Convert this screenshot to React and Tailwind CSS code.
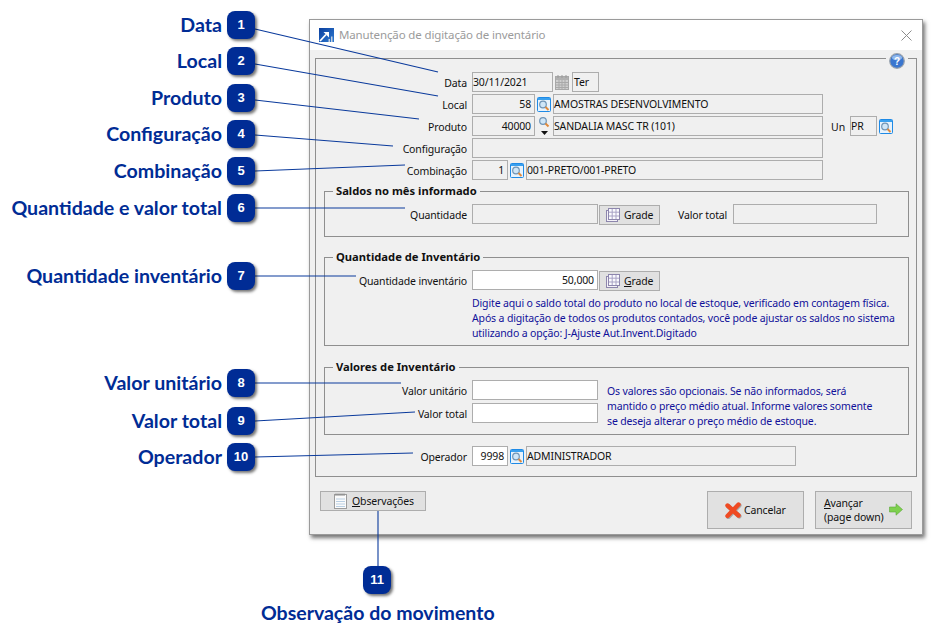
import React from "react";

const tahoma = { fontFamily: '"Noto Sans", sans-serif' };

// Callouts around the window
const callouts = [
  { n: 1, label: "Data", top: 11 },
  { n: 2, label: "Local", top: 47 },
  { n: 3, label: "Produto", top: 84 },
  { n: 4, label: "Configuração", top: 120 },
  { n: 5, label: "Combinação", top: 157 },
  { n: 6, label: "Quantidade e valor total", top: 194 },
  { n: 7, label: "Quantidade inventário", top: 262 },
  { n: 8, label: "Valor unitário", top: 369 },
  { n: 9, label: "Valor total", top: 407 },
  { n: 10, label: "Operador", top: 443 },
];

const lines = [
  [255, 29, 438, 72],
  [255, 64, 438, 96],
  [255, 100, 419, 119],
  [255, 135, 393, 146],
  [255, 171, 405, 165],
  [255, 208, 405, 208],
  [255, 276, 356, 276],
  [255, 383, 401, 383],
  [255, 421, 415, 412],
  [255, 457, 413, 453],
  [378, 511, 378, 566],
];

const Badge = ({ n, left, top }) => (
  <div
    className="absolute w-7 h-7 rounded-lg bg-[#002c95] text-white flex items-center justify-center text-[13px] font-bold shadow-[2px_2px_3px_rgba(0,0,0,0.55)]"
    style={{ left, top, fontFamily: '"Liberation Sans", sans-serif' }}
  >
    {n}
  </div>
);

// Search button with blue frame
const SearchIcon = () => (
  <svg width="14" height="15" viewBox="0 0 14 15" className="shrink-0">
    <rect x="0.5" y="0.5" width="13" height="14" rx="1" fill="#e8f3fc" stroke="#1e8ae6" />
    <rect x="1" y="1" width="12" height="2" fill="#3aa0ee" />
    <circle cx="6" cy="7.5" r="3.3" fill="#cfe6f7" stroke="#6f94b5" strokeWidth="1.2" />
    <path d="M8.5 10 L11.5 13" stroke="#e08a3c" strokeWidth="2" />
  </svg>
);

const Field = ({ w, children, right, white, ml }) => (
  <div
    className={`h-5 shrink-0 border border-[#adadad] flex items-center text-[10.5px] tracking-[-0.14px] leading-none text-[#111] whitespace-nowrap ${
      right ? "justify-end pr-[3px]" : ""
    } ${white ? "bg-white" : "bg-[#f0f0f0]"}`}
    style={{ width: w, marginLeft: ml || 0 }}
  >
    {children}
  </div>
);

const Row = ({ label, labelW, children }) => (
  <div className="flex items-center h-5">
    <div
      className="text-right text-[10.5px] tracking-[-0.14px] text-[#111] whitespace-nowrap pt-[3px] shrink-0"
      style={{ width: labelW }}
    >
      {label}
    </div>
    <div className="flex items-center ml-[5px]">{children}</div>
  </div>
);

const GridIcon = () => (
  <svg width="14" height="14" viewBox="0 0 14 14" className="shrink-0">
    <rect x="0.5" y="2.5" width="11" height="11" fill="#f4f2f8" stroke="#8d86ad" />
    <rect x="2.5" y="0.5" width="11" height="11" fill="#fafafe" stroke="#8d86ad" />
    <path d="M6.2 1V11M10 1V11M3 4.2H13M3 8H13" stroke="#a9a3c5" />
  </svg>
);

const GradeBtn = ({ underline }) => (
  <div className="w-[61px] h-5 mt-px ml-px border border-[#adadad] bg-[#e1e1e1] flex items-center pl-[6px] gap-[4px] text-[10.5px] tracking-[-0.14px] text-[#111] shrink-0">
    <GridIcon />
    <span className="pt-[2px]">
      <span className={underline ? "underline" : ""}>G</span>rade
    </span>
  </div>
);

const Group = ({ title, h, mt, children }) => (
  <div
    className="relative ml-2 w-[585px] border border-[#8f8f8f] pt-3"
    style={{ height: h, marginTop: mt }}
  >
    <div className="absolute -top-[9px] left-[8px] bg-[#f0f0f0] px-[3px] text-[11.2px] leading-4 font-bold text-[#111] whitespace-nowrap">
      {title}
    </div>
    {children}
  </div>
);

export default function App() {
  return (
    <div className="relative w-[946px] h-[641px] bg-white overflow-hidden" style={tahoma}>
      {/* Dialog */}
      <div className="pt-[19px] pl-[309px]">
        <div className="w-[614px] h-[516px] border border-[#9a9a9a] bg-[#f0f0f0] shadow-[2px_3px_4px_rgba(0,0,0,0.55)] flex flex-col">
          {/* Title bar */}
          <div className="h-[30px] bg-white flex items-center pl-[9px] pr-[10px] shrink-0">
            <svg width="15" height="14" viewBox="0 0 15 14" className="shrink-0">
              <defs>
                <linearGradient id="logoBg" x1="0" y1="0" x2="1" y2="1">
                  <stop offset="0" stopColor="#0b3f9e" />
                  <stop offset="1" stopColor="#2f7ad0" />
                </linearGradient>
              </defs>
              <rect width="15" height="14" fill="url(#logoBg)" />
              <path d="M1 13 L7 6.5" stroke="#fff" strokeWidth="1.8" />
              <path d="M4.5 4 H10 V9.5 Z" fill="#fff" />
              <path d="M9.5 14 V11 H11 V14 Z M12 14 V8.5 H13.5 V14 Z" fill="#c4cfdf" />
            </svg>
            <span className="ml-[5px] text-[11.5px] tracking-[-0.13px] text-[#9b9b9b] whitespace-nowrap">
              Manutenção de digitação de inventário
            </span>
            <svg width="11" height="11" viewBox="0 0 11 11" className="ml-auto">
              <path d="M0.5 0.5 L10.5 10.5 M10.5 0.5 L0.5 10.5" stroke="#8c8c8c" />
            </svg>
          </div>

          <div className="flex-1 px-[5px] pt-2">
            {/* Main panel */}
            <div className="relative w-[602px] h-[419px] border border-[#8f8f8f] pt-[13px]">
              {/* Help */}
              <div className="absolute -top-[6px] right-[8px] w-[22px] h-[14px] bg-[#f0f0f0] flex justify-center">
                <svg width="16" height="16" viewBox="0 0 16 16">
                  <circle cx="8" cy="8" r="7.3" fill="#3a76cf" stroke="#9aa3ad" strokeWidth="1.2" />
                  <ellipse cx="8" cy="4.6" rx="5" ry="2.6" fill="#8fb8ee" />
                  <text x="8" y="11.6" textAnchor="middle" fontSize="10" fontWeight="700" fill="#fff" fontFamily="Liberation Sans">?</text>
                </svg>
              </div>

              <div className="flex flex-col gap-[2px]">
                <Row label="Data" labelW={151}>
                  <Field w={81}>30/11/2021</Field>
                  <svg width="14" height="15" viewBox="0 0 14 15" className="ml-[2px] shrink-0">
                    <rect x="0.5" y="1.5" width="13" height="13" fill="#cfcfcf" stroke="#a8a8a8" />
                    <rect x="1" y="2" width="12" height="3" fill="#b0b0b0" />
                    <path d="M3 0V3M7 0V3M11 0V3" stroke="#9a9a9a" />
                    <path d="M1 7.5H13M1 10H13M1 12.5H13M4 5V14M7 5V14M10 5V14" stroke="#a9a9a9" />
                  </svg>
                  <Field w={27} ml={3}>
                    <span className="pl-px">Ter</span>
                  </Field>
                </Row>
                <Row label="Local" labelW={151}>
                  <Field w={63} right>58</Field>
                  <div className="ml-[2px]"><SearchIcon /></div>
                  <Field w={270} ml={2}>AMOSTRAS DESENVOLVIMENTO</Field>
                </Row>
                <Row label="Produto" labelW={151}>
                  <Field w={63} right>40000</Field>
                  <div className="ml-[2px] w-[14px] h-5 flex flex-col items-center">
                    <svg width="12" height="12" viewBox="1 1 12 12">
                      <circle cx="6" cy="6" r="3.3" fill="#cfe6f7" stroke="#6f94b5" strokeWidth="1.2" />
                      <path d="M8.5 8.5 L11.5 11.5" stroke="#e08a3c" strokeWidth="2" />
                    </svg>
                    <svg width="7" height="4" viewBox="0 0 7 4" className="mt-[3px]">
                      <path d="M0 0H7L3.5 4Z" fill="#111" />
                    </svg>
                  </div>
                  <Field w={270} ml={2}>SANDALIA MASC TR (101)</Field>
                  <span className="ml-2 text-[10.5px] text-[#111] w-[19px] pt-[3px]">Un</span>
                  <Field w={27}>PR</Field>
                  <div className="ml-[2px]"><SearchIcon /></div>
                </Row>
                <Row label="Configuração" labelW={151}>
                  <Field w={351} />
                </Row>
                <Row label="Combinação" labelW={151}>
                  <Field w={36} right>1</Field>
                  <div className="ml-[2px]"><SearchIcon /></div>
                  <Field w={297} ml={2}>001-PRETO/001-PRETO</Field>
                </Row>
              </div>

              <Group title="Saldos no mês informado" h={46} mt={11}>
                <Row label="Quantidade" labelW={142}>
                  <Field w={126} />
                  <GradeBtn />
                  <span className="ml-[18px] text-[10.5px] tracking-[-0.14px] text-[#111] w-[55px] pt-[3px]">Valor total</span>
                  <Field w={144} />
                </Row>
              </Group>

              <Group title="Quantidade de Inventário" h={89} mt={20}>
                <Row label="Quantidade inventário" labelW={142}>
                  <Field w={126} right white>50,000</Field>
                  <GradeBtn underline />
                </Row>
                <div className="ml-[147px] mt-[6px] text-[10.5px] tracking-[-0.14px] leading-[15px] text-[#10109a] whitespace-nowrap">
                  <div>Digite aqui o saldo total do produto no local de estoque, verificado em contagem física.</div>
                  <div>Após a digitação de todos os produtos contados, você pode ajustar os saldos no sistema</div>
                  <div>utilizando a opção: J-Ajuste Aut.Invent.Digitado</div>
                </div>
              </Group>

              <Group title="Valores de Inventário" h={68} mt={21}>
                <div className="flex">
                  <div className="flex flex-col gap-[3px]">
                    <Row label="Valor unitário" labelW={142}>
                      <Field w={126} white />
                    </Row>
                    <Row label="Valor total" labelW={142}>
                      <Field w={126} white />
                    </Row>
                  </div>
                  <div className="ml-[9px] mt-[4px] text-[10.5px] tracking-[-0.14px] leading-[15px] text-[#10109a] whitespace-nowrap">
                    <div>Os valores são opcionais. Se não informados, será</div>
                    <div>mantido o preço médio atual. Informe valores somente</div>
                    <div>se deseja alterar o preço médio de estoque.</div>
                  </div>
                </div>
              </Group>

              <div className="mt-[11px]">
                <Row label="Operador" labelW={151}>
                  <Field w={36} right white>9998</Field>
                  <div className="ml-[2px]"><SearchIcon /></div>
                  <Field w={270} ml={2}>ADMINISTRADOR</Field>
                </Row>
              </div>
            </div>

            {/* Footer buttons */}
            <div className="flex items-start pt-[14px] px-[5px]">
              <div className="w-[106px] h-5 border border-[#adadad] bg-[#e1e1e1] flex items-center pl-[13px] gap-[5px] text-[10.5px] tracking-[-0.14px] text-[#111]">
                <svg width="13" height="16" viewBox="0 0 13 16" className="shrink-0">
                  <rect x="0.5" y="1.5" width="12" height="14" fill="#fbfbfb" stroke="#9c9c9c" />
                  <path d="M2 0.5V3M4 0.5V3M6 0.5V3M8 0.5V3M10 0.5V3" stroke="#8a8a8a" />
                  <path d="M2 6H11M2 8.5H11M2 11H11M2 13.5H11" stroke="#b9cfe3" />
                </svg>
                <span className="pt-px"><span className="underline">O</span>bservações</span>
              </div>
              <div className="ml-auto w-[97px] h-[38px] border border-[#adadad] bg-[#e1e1e1] flex items-center pl-4 gap-[2px] text-[10.5px] tracking-[-0.14px] text-[#111]">
                <svg width="18" height="17" viewBox="0 0 18 17" className="shrink-0">
                  <path d="M3.5 3.5 L14.5 13.5 M14.5 2.5 L3.5 14" stroke="#000" strokeOpacity="0.25" strokeWidth="4.6" strokeLinecap="round" transform="translate(0.8 0.8)" />
                  <path d="M3.5 3.5 L14.5 13.5 M14.5 2.5 L3.5 14" stroke="#ef4a22" strokeWidth="4.4" strokeLinecap="round" />
                </svg>
                <span className="pt-[2px]">Cancelar</span>
              </div>
              <div className="ml-[11px] w-[97px] h-[38px] border border-[#adadad] bg-[#e1e1e1] flex items-center pl-2 text-[10.5px] tracking-[-0.14px] leading-[14px] text-[#111]">
                <span>
                  <span className="underline">A</span>vançar
                  <br />
                  (page down)
                </span>
                <svg width="14" height="13" viewBox="0 0 14 13" className="ml-[5px] mb-[2px] shrink-0">
                  <path d="M0.5 4 H7 V0.8 L13.5 6.5 L7 12.2 V9 H0.5 Z" fill="#7ed04e" stroke="#5da83a" strokeWidth="0.6" />
                </svg>
              </div>
            </div>
          </div>
        </div>
      </div>

      {/* Leader lines */}
      <svg width="946" height="641" viewBox="0 0 946 641" className="absolute top-0 left-0 pointer-events-none">
        {lines.map(([x1, y1, x2, y2], i) => (
          <line key={i} x1={x1} y1={y1} x2={x2} y2={y2} stroke="#0a3a9c" strokeWidth="1.1" />
        ))}
      </svg>

      {/* Badges + labels */}
      {callouts.map((c) => (
        <React.Fragment key={c.n}>
          <div
            className="absolute right-[724px] h-7 flex items-center text-[19.6px] font-bold text-[#002c95] whitespace-nowrap"
            style={{ top: c.top, fontFamily: "Lato, sans-serif" }}
          >
            {c.label}
          </div>
          <Badge n={c.n} left={227} top={c.top} />
        </React.Fragment>
      ))}

      <Badge n={11} left={363} top={566} />
      <div
        className="absolute left-[261px] top-[598px] text-[19.5px] font-bold text-[#002c95] whitespace-nowrap"
        style={{ fontFamily: "Lato, sans-serif" }}
      >
        Observação do movimento
      </div>
    </div>
  );
}
